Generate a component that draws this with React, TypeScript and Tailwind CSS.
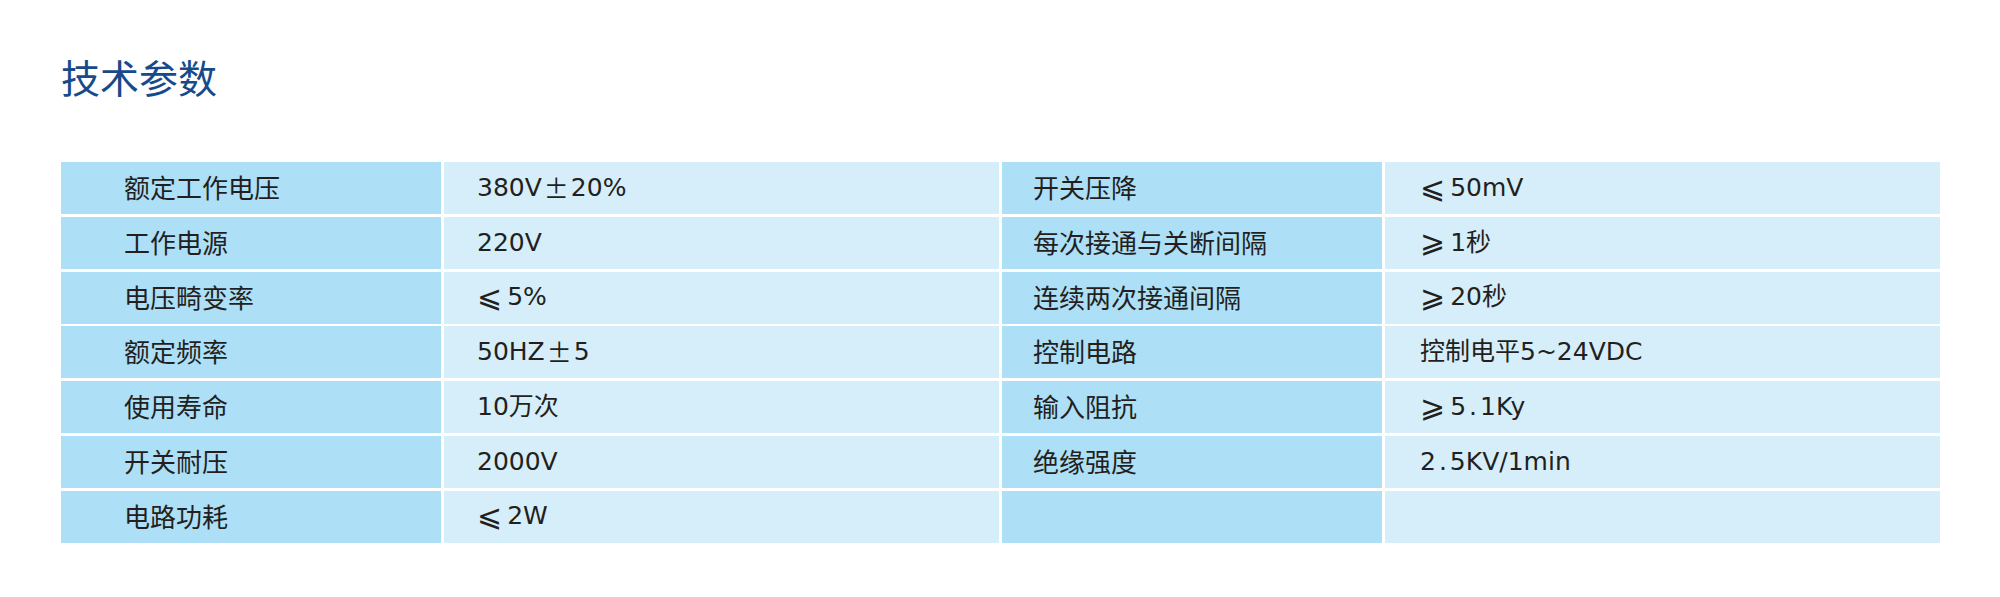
import React from 'react';

type Row = [string, React.ReactNode, string, React.ReactNode];

const Pm = () => <span className="font-['Noto_Sans_CJK_SC',sans-serif] px-[2px]">±</span>;
const Dot = () => <span className="px-[3px]">.</span>;
const Le = () => <span className="text-[30px] leading-none mr-[5px]">⩽</span>;
const Ge = () => <span className="text-[30px] leading-none mr-[5px]">⩾</span>;

const rows: Row[] = [
  ['额定工作电压', <>380V<Pm />20%</>, '开关压降', <><Le />50mV</>],
  ['工作电源', '220V', '每次接通与关断间隔', <><Ge />1秒</>],
  ['电压畸变率', <><Le />5%</>, '连续两次接通间隔', <><Ge />20秒</>],
  ['额定频率', <>50HZ<Pm />5</>, '控制电路', '控制电平5~24VDC'],
  ['使用寿命', '10万次', '输入阻抗', <><Ge />5<Dot />1Ky</>],
  ['开关耐压', '2000V', '绝缘强度', <>2<Dot />5KV/1min</>],
  ['电路功耗', <><Le />2W</>, '', ''],
];

const labelCls =
  "flex items-center h-[52px] pb-[3px] bg-[#ade0f7] text-[26px] text-[#231f20] font-['Noto_Sans_CJK_SC',sans-serif]";
const valueCls =
  "flex items-center h-[52px] pb-[1px] bg-[#d6eefa] text-[25px] text-[#231f20] font-['DejaVu_Sans','Noto_Sans_CJK_SC',sans-serif] whitespace-nowrap";

export default function App() {
  return (
    <div className="w-[2000px] h-[597px] bg-white pl-[61px] pt-[54px]">
      {/* heading */}
      <h2 className="text-[39px] leading-[44px] text-[#164a8a] font-['Noto_Sans_CJK_SC',sans-serif]">
        技术参数
      </h2>

      <div className="mt-[64px] w-[1879px] grid grid-cols-[380px_555px_380px_555px] gap-x-[3px] gap-y-[2.75px]">
        {rows.map((r, i) => (
          <React.Fragment key={i}>
            <div className={`${labelCls} pl-[63px]`}>{r[0]}</div>
            <div className={`${valueCls} pl-[33px]`}>{r[1]}</div>
            <div className={`${labelCls} pl-[31px]`}>{r[2]}</div>
            <div className={`${valueCls} pl-[35px]`}>{r[3]}</div>
          </React.Fragment>
        ))}
      </div>
    </div>
  );
}
